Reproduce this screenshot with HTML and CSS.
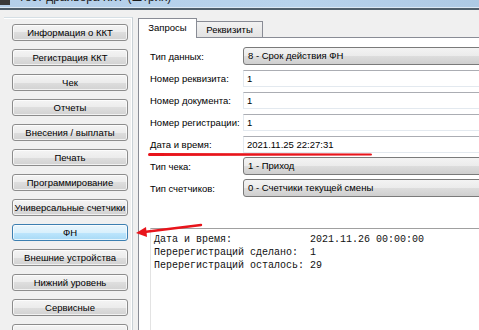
FILE: index.html
```html
<!DOCTYPE html>
<html>
<head>
    <meta charset="UTF-8">
    <title>Тест драйвера ККТ</title>
    <link rel="stylesheet" href="styles.css">
</head>
<body>
    <div id="win">
        <div class="titlebar">
            <span class="ticon"></span>
            <span class="ttext">Тест драйвера ККТ (Штрих)</span>
        </div>
        <div class="main">
            <div class="side">
                <div class="group">
                    <div class="btn">Информация о ККТ</div>
                    <div class="btn">Регистрация ККТ</div>
                    <div class="btn">Чек</div>
                    <div class="btn">Отчеты</div>
                    <div class="btn">Внесения / выплаты</div>
                    <div class="btn">Печать</div>
                    <div class="btn">Программирование</div>
                    <div class="btn">Универсальные счетчики</div>
                    <div class="btn hot">ФН</div>
                    <div class="btn">Внешние устройства</div>
                    <div class="btn">Нижний уровень</div>
                    <div class="btn">Сервисные</div>
                    <div class="btn">ЕГАИС</div>
                </div>
            </div>
            <div class="tabs">
                <div class="tabstrip">
                    <div class="tab active">Запросы</div>
                    <div class="tab">Реквизиты</div>
                </div>
                <div class="page">
                    <div class="row"><span class="lbl">Тип данных:</span><div class="combo">8 - Срок действия ФН</div></div>
                    <div class="row"><span class="lbl">Номер реквизита:</span><div class="edit">1</div></div>
                    <div class="row"><span class="lbl">Номер документа:</span><div class="edit">1</div></div>
                    <div class="row"><span class="lbl">Номер регистрации:</span><div class="edit">1</div></div>
                    <div class="row"><span class="lbl">Дата и время:</span><div class="edit">2021.11.25 22:27:31</div></div>
                    <div class="row"><span class="lbl">Тип чека:</span><div class="combo">1 - Приход</div></div>
                    <div class="row"><span class="lbl">Тип счетчиков:</span><div class="combo">0 - Счетчики текущей смены</div></div>
<pre class="out">Дата и время:             2021.11.26 00:00:00
Перерегистраций сделано:  1
Перерегистраций осталось: 29</pre>
                </div>
            </div>
        </div>
        <!-- пометки красным поверх окна -->
        <div class="mark-line"></div>
        <svg class="mark-arrow" width="80" height="24" viewBox="0 0 80 24">
            <line x1="14" y1="14" x2="71" y2="7" stroke="#e8141b" stroke-width="2.4" stroke-linecap="round"/>
            <polygon points="6,15 17,19 16,9" fill="#e8141b"/>
        </svg>
    </div>
</body>
</html>
```

FILE: styles.css
```css
*{
    margin: 0;
    padding: 0;
    box-sizing: border-box;
}
body{
    width: 479px;
    height: 330px;
    overflow: hidden;
    background: #f0f0f0;
    font-family: "Liberation Sans", Arial, sans-serif;
    font-size: 9.5px;
    color: #000;
}
#win{
    position: relative;
    width: 600px;
    height: 330px;
}
.titlebar{
    height: 10px;
    overflow: hidden;
    display: flex;
    background: linear-gradient(90deg, #b4cfe9 0%, #b8d3ec 50%, #a6c2de 100%);
    border-bottom: 2px solid #4f5f6c;
    box-shadow: inset 0 -1px 0 #dbe8f4;
}
.titlebar .ticon{
    width: 10px;
    height: 5px;
    background: #3a3a3a;
}
.titlebar .ttext{
    display: block;
    margin: -11px 0 0 8px;
    line-height: 16px;
    font-size: 12px;
    white-space: nowrap;
    color: #1a1a1a;
}
.main{
    display: flex;
    align-items: flex-start;
}
.side{
    padding: 7px 0 0 4px;
}
.group{
    width: 129px;
    height: 330px;
    border-top: 1px solid #d5dfe5;
    border-right: 1px solid #c9d1d6;
    box-shadow: inset -1px 1px 0 #fff;
    padding: 6px 0 0 8px;
    display: flex;
    flex-direction: column;
    gap: 8px;
}
.btn{
    width: 116px;
    height: 17px;
    line-height: 15px;
    text-align: center;
    white-space: nowrap;
    overflow: hidden;
    border: 1px solid #8c8c8c;
    border-radius: 3px;
    background: linear-gradient(#f4f4f4 0%, #ececec 50%, #dedede 50%, #d2d2d2 100%);
    box-shadow: inset 0 0 0 1px rgba(255,255,255,0.7);
}
.btn.hot{
    border-color: #3c7fb1;
    background: linear-gradient(#eaf6fd 0%, #d9f0fc 50%, #bee6fd 50%, #a7d9f5 100%);
}
.tabs{
    width: 420px;
    margin: 8px 0 0 5px;
}
.tabstrip{
    display: flex;
    align-items: flex-end;
    height: 19px;
}
.tab{
    border: 1px solid #898c95;
    border-bottom: none;
    text-align: center;
}
.tab.active{
    position: relative;
    z-index: 1;
    width: 59px;
    height: 20px;
    margin-bottom: -1px;
    padding-top: 3px;
    background: #fff;
}
.tab:not(.active){
    width: 67px;
    height: 16px;
    margin-left: -1px;
    padding-top: 2px;
    background: linear-gradient(#f2f2f2, #e3e3e3);
}
.page{
    height: 300px;
    border: 1px solid #898c95;
    background: #fff;
    padding: 9px 0 0 11px;
}
.row{
    display: flex;
    align-items: center;
    height: 18px;
    margin-bottom: 4px;
}
.lbl{
    width: 93px;
    flex: none;
    white-space: nowrap;
}
.edit{
    flex: 1;
    height: 17px;
    line-height: 15px;
    padding-left: 3px;
    background: #fff;
    border: 1px solid #e3e9ef;
    border-top-color: #abadb3;
}
.combo{
    flex: 1;
    height: 18px;
    line-height: 16px;
    padding-left: 4px;
    border: 1px solid #7a7a7a;
    border-radius: 3px;
    background: linear-gradient(#f3f3f3 0%, #ebebeb 50%, #dddddd 50%, #cfcfcf 100%);
}
.out{
    margin-top: 31px;
    height: 120px;
    border-top: 1px solid #a0a0a0;
    border-left: 1px solid #e3e3e3;
    padding: 4px 0 0 3px;
    font-family: "Liberation Mono", "Courier New", monospace;
    font-size: 10px;
    line-height: 13px;
    color: #111;
}
.mark-line{
    position: absolute;
    left: 148px;
    top: 153px;
    width: 224px;
    height: 3px;
    background: #e8141b;
    border-radius: 2px;
    clip-path: polygon(0 0, 100% 15%, 100% 85%, 0 100%);
}
.mark-arrow{
    position: absolute;
    left: 130px;
    top: 218px;
}
```
